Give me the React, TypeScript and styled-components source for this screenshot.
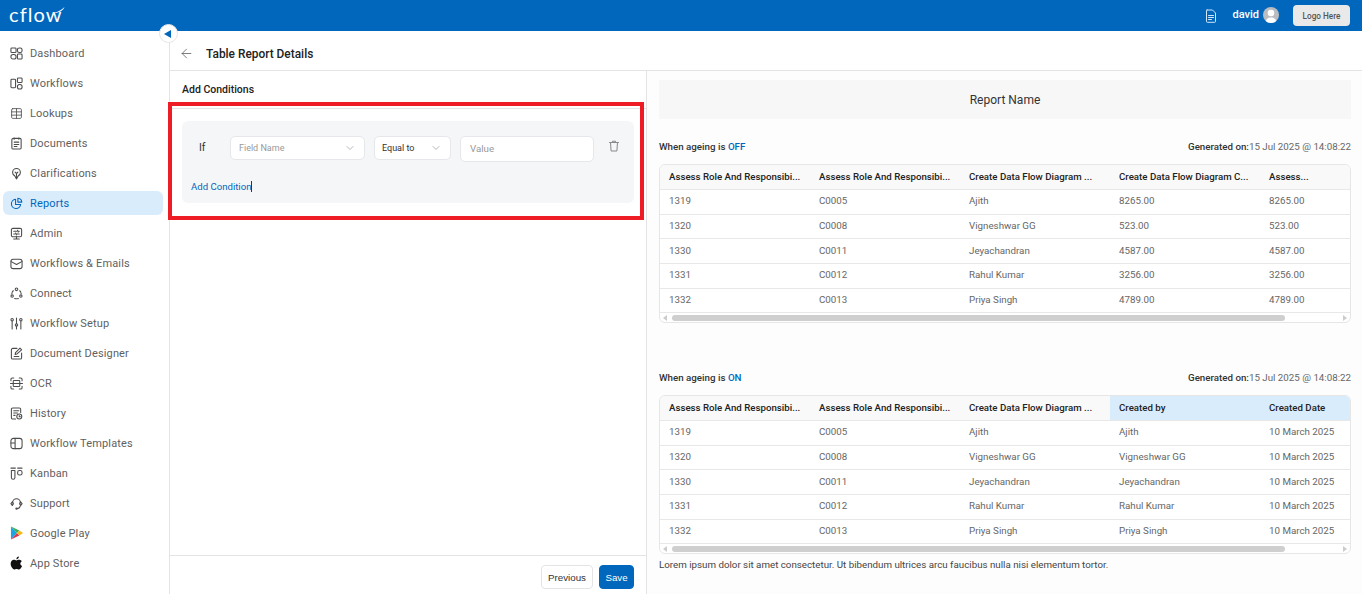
import React from 'react'
import styled, { createGlobalStyle } from 'styled-components'
import { ArrowLeft, ChevronDown, Table } from 'lucide-react'

const GlobalStyle = createGlobalStyle`
  html, body { margin: 0; padding: 0; height: 100%; overflow: hidden; }
  body { font-family: Roboto, "Liberation Sans", sans-serif; font-size: 12px; color: #222; background: #fff; }
  * { box-sizing: border-box; }
`

const Page = styled.div`
  position: relative;
  width: 1362px;
  height: 594px;
  display: flex;
  flex-direction: column;
  overflow: hidden;
`

const TopBar = styled.header`
  height: 31px;
  flex: none;
  background: #0067bd;
  display: flex;
  align-items: center;
  padding: 0 12px 0 9px;
`

const Logo = styled.div`
  position: relative;
  color: #fff;
  font-family: Lato, Roboto, sans-serif;
  font-weight: 400;
  font-size: 20px;
  line-height: 22px;
  letter-spacing: 1.1px;
  margin-top: -3px;
  svg { position: absolute; right: -2px; top: 4px; }
`

const TopRight = styled.div`
  margin-left: auto;
  display: flex;
  align-items: center;
  color: #fff;
`

const UserName = styled.span`
  font-weight: 500;
  font-size: 11px;
  margin: -2px 4px 0 15px;
`

const Avatar = styled.div`
  width: 16px;
  height: 16px;
  border-radius: 50%;
  background: #b9bcc0;
  overflow: hidden;
  margin: -1px 14px 0 0;
`

const LogoBox = styled.div`
  width: 57px;
  height: 21px;
  border-radius: 4px;
  background: #e9e9e9;
  color: #555;
  font-size: 8.2px;
  font-weight: 500;
  display: flex;
  align-items: center;
  justify-content: center;
`

const Body = styled.div`
  flex: 1;
  display: flex;
  min-height: 0;
`

const Sidebar = styled.nav`
  width: 170px;
  flex: none;
  border-right: 1px solid #e4e4e4;
  padding: 10px 6px 0 3px;
  display: flex;
  flex-direction: column;
  gap: 6px;
`

const NavItem = styled.div<{ $active?: boolean }>`
  height: 24px;
  flex: none;
  display: flex;
  align-items: center;
  gap: 7px;
  padding-left: 7px;
  border-radius: 6px;
  font-size: 11px;
  letter-spacing: 0.15px;
  color: ${p => (p.$active ? '#0067bd' : '#5f5f5f')};
  background: ${p => (p.$active ? '#d9ecfc' : 'transparent')};
  svg { flex: none; }
`

const CollapseButton = styled.button`
  position: absolute;
  left: 159px;
  top: 24px;
  width: 19px;
  height: 19px;
  padding: 0;
  border: 1px solid #e6e6e6;
  border-radius: 50%;
  background: #fff;
  display: flex;
  align-items: center;
  justify-content: center;
  &::before {
    content: '';
    margin-left: -2px;
    border-style: solid;
    border-width: 4.5px 7px 4.5px 0;
    border-color: transparent #0067bd transparent transparent;
  }
`

const Main = styled.main`
  flex: 1;
  min-width: 0;
  display: flex;
  flex-direction: column;
`

const PageHeader = styled.div`
  height: 40px;
  flex: none;
  display: flex;
  align-items: center;
  gap: 12px;
  padding: 5px 0 0 9px;
  border-bottom: 1px solid #e4e4e4;
  color: #555;
`

const PageTitle = styled.h1`
  margin: 1px 0 0;
  font-size: 11.9px;
  font-weight: 500;
  color: #222;
`

const Split = styled.div`
  flex: 1;
  min-height: 0;
  display: flex;
`

const LeftPane = styled.section`
  width: 477px;
  flex: none;
  border-right: 1px solid #e4e4e4;
  display: flex;
  flex-direction: column;
`

const SectionTitle = styled.h2`
  margin: 0;
  height: 38px;
  flex: none;
  padding: 12px 12px 0;
  font-size: 10.5px;
  line-height: 14px;
  font-weight: 500;
  color: #222;
  border-bottom: 1px solid #e4e4e4;
`

const LeftContent = styled.div`
  flex: 1;
  padding: 12px;
`

const ConditionCard = styled.div`
  height: 82px;
  background: #f5f6f8;
  border-radius: 6px;
  padding: 15px 9px 0;
`

const ConditionRow = styled.div`
  display: flex;
  align-items: flex-start;
`

const IfLabel = styled.span`
  width: 39px;
  padding: 5px 0 0 8px;
  font-size: 10.5px;
  line-height: 13px;
  color: #333;
`

const SelectBox = styled.div<{ $width: number; $filled?: boolean }>`
  width: ${p => p.$width}px;
  height: 24px;
  margin-right: 9px;
  padding: 0 8px 0 ${p => (p.$filled ? 7 : 8)}px;
  display: flex;
  align-items: center;
  justify-content: space-between;
  background: #fff;
  border: 1px solid #e6e7ea;
  border-radius: 5px;
  font-size: 9px;
  color: ${p => (p.$filled ? '#333' : '#999')};
  svg { color: #888; }
`

const ValueInput = styled.div`
  width: 134px;
  height: 26px;
  padding: 0 9px 2px;
  display: flex;
  align-items: center;
  background: #fff;
  border: 1px solid #e6e7ea;
  border-radius: 5px;
  font-size: 9.7px;
  color: #999;
`

const DeleteButton = styled.span`
  margin: 4px 0 0 14px;
  display: flex;
`

const AddCondition = styled.div`
  display: flex;
  align-items: center;
  height: 14px;
  margin-top: 17px;
  font-size: 9.6px;
  color: #0067bd;
  &::after {
    content: '';
    width: 1px;
    height: 11px;
    background: #1a3a5c;
  }
`

const LeftFooter = styled.div`
  height: 39px;
  flex: none;
  border-top: 1px solid #e4e4e4;
  display: flex;
  justify-content: flex-end;
  align-items: flex-start;
  gap: 6px;
  padding: 9px 12px 0 0;
`

const Button = styled.button<{ $primary?: boolean }>`
  height: 24px;
  width: ${p => (p.$primary ? 35 : 52)}px;
  padding: 0;
  border-radius: 4px;
  font-family: "Liberation Sans", Arial, sans-serif;
  font-size: 9.75px;
  border: 1px solid ${p => (p.$primary ? '#0067bd' : '#e4e4e4')};
  background: ${p => (p.$primary ? '#0067bd' : '#fff')};
  color: ${p => (p.$primary ? '#fff' : '#333')};
`

const RightPane = styled.section`
  flex: 1;
  min-width: 0;
  background: #fdfdfd;
  padding: 9px 11px 0 12px;
`

const ReportName = styled.div`
  height: 39px;
  background: #f7f7f7;
  display: flex;
  align-items: center;
  justify-content: center;
  font-size: 12px;
  color: #333;
`

const ReportBlock = styled.div<{ $gap: number }>`
  margin-top: ${p => p.$gap}px;
`

const MetaRow = styled.div`
  display: flex;
  justify-content: space-between;
  align-items: center;
  height: 14px;
  font-size: 9.75px;
  font-weight: 500;
  color: #333;
`

const StateWord = styled.span`
  color: #0067bd;
`

const GeneratedValue = styled.span`
  font-weight: 400;
  color: #666;
`

const TableFrame = styled.div<{ $gap: number }>`
  margin-top: ${p => p.$gap}px;
  border: 1px solid #e6e6e6;
  border-radius: 6px;
  overflow: hidden;
  background: #fff;
`

const HeadRow = styled.div`
  display: grid;
  grid-template-columns: repeat(4, 150px) 1fr;
  height: 25px;
  border-bottom: 1px solid #e8e8e8;
  background: #f9f9f9;
`

const HeadCell = styled.div<{ $highlight?: boolean }>`
  padding: 0 0 1px 9px;
  display: flex;
  align-items: center;
  font-size: 9.7px;
  font-weight: 500;
  white-space: nowrap;
  color: #222;
  background: ${p => (p.$highlight ? '#d9ecfc' : 'transparent')};
`

const DataRow = styled.div`
  display: grid;
  grid-template-columns: repeat(4, 150px) 1fr;
  height: 24.7px;
  border-bottom: 1px solid #e8e8e8;
  &:last-of-type { border-bottom: 0; }
`

const DataCell = styled.div`
  padding: 0 0 2px 9px;
  display: flex;
  align-items: center;
  font-size: 9.75px;
  white-space: nowrap;
  color: #666;
`

const ScrollBar = styled.div`
  height: 8.5px;
  display: flex;
  align-items: center;
  padding: 0 3px;
  gap: 3px;
`

const ScrollArrow = styled.span<{ $right?: boolean }>`
  width: 0;
  height: 0;
  border-style: solid;
  border-width: ${p => (p.$right ? '3.5px 0 3.5px 4px' : '3.5px 4px 3.5px 0')};
  border-color: ${p => (p.$right ? 'transparent transparent transparent #ccc' : 'transparent #ccc transparent transparent')};
`

const ScrollTrack = styled.div`
  flex: 1;
  height: 6px;
  margin: 0 0 0 2px;
`

const ScrollThumb = styled.div`
  width: 613px;
  height: 6px;
  border-radius: 3px;
  background: #cfcfcf;
`

const Note = styled.p`
  margin: 5px 0 0;
  font-size: 9.75px;
  line-height: 12px;
  color: #444;
`

const RedFrame = styled.div`
  position: absolute;
  left: 168px;
  top: 102px;
  width: 476px;
  height: 118px;
  border: 4px solid #ee1c25;
  pointer-events: none;
`

const I = ({ children, color = '#4c4c4c' }: { children: React.ReactNode; color?: string }) => (
  <svg width="13" height="13" viewBox="0 0 14 14" fill="none" stroke={color} strokeWidth="1.15" strokeLinecap="round" strokeLinejoin="round">
    {children}
  </svg>
)

const navItems: { label: string; active?: boolean; icon: React.ReactNode }[] = [
  { label: 'Dashboard', icon: <I><rect x="1" y="1" width="5.5" height="5" rx="1" /><rect x="8" y="1" width="5" height="5" rx="2" /><rect x="8" y="7.5" width="5" height="5.500" rx="1" /><rect x="1" y="8" width="5.5" height="5" rx="2.200" /></I> },
  { label: 'Workflows', icon: <I><rect x="1" y="2.500" width="5" height="9" rx="1" /><rect x="8" y="1" width="5" height="5" rx="1" /><rect x="8" y="8" width="5" height="5" rx="2.200" /></I> },
  { label: 'Lookups', icon: <Table size={13} color="#4c4c4c" strokeWidth={1.5} /> },
  { label: 'Documents', icon: <I><rect x="2" y="1.500" width="10" height="11.500" rx="1.500" /><path d="M4.500 1v1.500M9.500 1v1.500M4.500 5.500h5M4.500 8h5M4.500 10.300h3" /></I> },
  { label: 'Clarifications', icon: <I><path d="M5 9.500C3.600 8.600 2.800 7.300 2.800 5.900a4.200 4.200 0 0 1 8.400 0c0 1.400-.8 2.700-2.200 3.600L7 12.800z" /><path d="M5.500 5.500 7 7l1.500-1.500M7 7v5" /></I> },
  { label: 'Reports', active: true, icon: <I color="#0067bd"><path d="M6 2.500a5 5 0 1 0 5.500 5.500H6z" /><path d="M8.500 1.300a4.500 4.500 0 0 1 4.200 4.200H8.500z" /></I> },
  { label: 'Admin', icon: <I><rect x="1.500" y="1.500" width="11" height="9" rx="1.500" /><path d="M4 13h6M7 10.500V13M4 4.500h3M9 4.500h1M4 7.500h1M7 7.500h3M8 3.500l.8 2M6 6.500l.8 2" /></I> },
  { label: 'Workflows & Emails', icon: <I><rect x="1" y="2.500" width="12" height="10" rx="2.400" /><path d="M1.300 5 7 8l5.700-3" /></I> },
  { label: 'Connect', icon: <I><circle cx="7" cy="2.500" r="1.400" /><circle cx="2.300" cy="9.800" r="1.300" /><circle cx="11.700" cy="9.800" r="1.300" /><path d="M3.600 4c-1 .8-1.500 2-1.600 3.200M10.400 4c1 .8 1.500 2 1.600 3.200M5 12.400c1.300.4 2.700.4 4 0" strokeDasharray="2 1" /></I> },
  { label: 'Workflow Setup', icon: <I><circle cx="2.300" cy="3" r="1.300" /><circle cx="7" cy="8.500" r="1.300" /><circle cx="11.700" cy="3" r="1.300" /><path d="M2.300 4.300V13M7 1v6.200M7 9.800V13M11.700 4.300V13" /></I> },
  { label: 'Document Designer', icon: <I><path d="M7.500 1.500H3c-.9 0-1.500.6-1.500 1.500v8.500c0 .9.6 1.500 1.500 1.500h8c.9 0 1.500-.6 1.500-1.500V6.500" /><path d="M4.500 10.300h5M5.500 8 6 6l4.800-4.800L12.500 3 7.500 7.500z" /></I> },
  { label: 'OCR', icon: <I><path d="M1 4V2.500a1.500 1.500 0 0 1 1.500-1.500H4M10 1h1.500A1.500 1.500 0 0 1 13 2.500V4M1 10v1.500A1.500 1.500 0 0 0 2.500 13H4M10 13h1.500a1.500 1.500 0 0 0 1.500-1.500V10M.5 7h13" /><rect x="3.500" y="3.800" width="7" height="6.400" rx=".8" /></I> },
  { label: 'History', icon: <I><path d="M6 13H3c-.9 0-1.500-.6-1.500-1.500v-9C1.500 1.600 2.100 1 3 1h7c.9 0 1.500.6 1.500 1.500V6M4 4h5.500M4 6.500h4M4 9h1.500" /><circle cx="10" cy="10.300" r="2.700" /><path d="M10 9.200v1.200h1" /></I> },
  { label: 'Workflow Templates', icon: <I><rect x="1" y="1.500" width="12" height="11" rx="2.600" /><path d="M5.500 1.500v11M1 6.500h4.500" /></I> },
  { label: 'Kanban', icon: <I><path d="M1 1.200h4.800M8.200 1.200H13" /><path d="M1.500 3.800h3.800v7.400a1.900 1.900 0 0 1-3.800 0z" /><rect x="8.200" y="3.800" width="4.800" height="4.800" rx="2" /></I> },
  { label: 'Support', icon: <I><path d="M2.800 6.500V6a4.200 4.200 0 0 1 8.400 0v.5" /><path d="M2.600 5.200 1 7.200l1.600 2 1.100-2zM11.400 5.200 13 7.200l-1.600 2-1.100-2z" /><path d="M11 9.800c-.5 1.700-1.900 2.700-3.500 2.700" /><circle cx="7" cy="12.500" r=".7" /></I> },
  { label: 'Google Play', icon: <svg width="13" height="14" viewBox="0 0 14 14"><path d="M1 0v14L7.500 7z" fill="#1aa6e0" /><path d="M1 0 7.500 7l2.600-2.600z" fill="#3cab5b" /><path d="M1 14 7.500 7l2.600 2.600z" fill="#e0384a" /><path d="M10.100 4.400 14 7l-3.900 2.600L7.500 7z" fill="#f7b716" /></svg> },
  { label: 'App Store', icon: <svg width="13" height="14" viewBox="0 0 14 14"><path d="M9.600 0c.1 1.400-1.100 3-2.700 2.900-.2-1.400 1.300-2.900 2.700-2.900zM13 10.100c-.7 1.800-2.200 3.900-3.500 3.900-.9 0-1.300-.6-2.400-.6s-1.600.6-2.400.6C3 14 .7 10.700.7 7.900c0-2.800 1.800-4.300 3.500-4.300 1.100 0 1.900.7 2.700.7.600 0 1.700-.8 3-.7.500 0 2 .2 2.900 1.600-2.400 1.500-2 4.100.2 4.900z" fill="#111" /></svg> },
]

type RowData = string[]

const offRows: RowData[] = [
  ['1319', 'C0005', 'Ajith', '8265.00', '8265.00'],
  ['1320', 'C0008', 'Vigneshwar GG', '523.00', '523.00'],
  ['1330', 'C0011', 'Jeyachandran', '4587.00', '4587.00'],
  ['1331', 'C0012', 'Rahul Kumar', '3256.00', '3256.00'],
  ['1332', 'C0013', 'Priya Singh', '4789.00', '4789.00'],
]

const onRows: RowData[] = [
  ['1319', 'C0005', 'Ajith', 'Ajith', '10 March 2025'],
  ['1320', 'C0008', 'Vigneshwar GG', 'Vigneshwar GG', '10 March 2025'],
  ['1330', 'C0011', 'Jeyachandran', 'Jeyachandran', '10 March 2025'],
  ['1331', 'C0012', 'Rahul Kumar', 'Rahul Kumar', '10 March 2025'],
  ['1332', 'C0013', 'Priya Singh', 'Priya Singh', '10 March 2025'],
]

const ReportTable = ({ heads, rows, highlightFrom, gap }: { heads: string[]; rows: RowData[]; highlightFrom?: number; gap: number }) => (
  <TableFrame $gap={gap}>
    <HeadRow>
      {heads.map((h, i) => (
        <HeadCell key={i} $highlight={highlightFrom !== undefined && i >= highlightFrom}>{h}</HeadCell>
      ))}
    </HeadRow>
    {rows.map(r => (
      <DataRow key={r[0]}>
        {r.map((c, i) => <DataCell key={i}>{c}</DataCell>)}
      </DataRow>
    ))}
    <ScrollBar>
      <ScrollArrow />
      <ScrollTrack><ScrollThumb /></ScrollTrack>
      <ScrollArrow $right />
    </ScrollBar>
  </TableFrame>
)

export default function App() {
  return (
    <Page>
      <GlobalStyle />
      <TopBar>
        <Logo>
          cflow
          <svg width="10" height="6" viewBox="0 0 10 6" fill="#fff"><path d="M0 5.500C3.500 4.500 6.500 3 9.500 0 8.500 3 5 5.500 0 6z" /></svg>
        </Logo>
        <TopRight>
          <svg width="12" height="14" viewBox="0 0 12 14" fill="none" stroke="#cfe6fb" strokeWidth="1" strokeLinecap="round" strokeLinejoin="round"><path d="M2 1h5.500L10.500 4v8.500a.8.8 0 0 1-.8.8H2.300a.8.8 0 0 1-.8-.8V1.800A.8.800 0 0 1 2 1z" /><path d="M3.500 6.500h5M3.500 8.500h5M3.500 10.500h3" /></svg>
          <UserName>david</UserName>
          <Avatar>
            <svg width="16" height="16" viewBox="0 0 16 16"><circle cx="8" cy="6" r="3.300" fill="#fff" /><path d="M2.500 16c0-3.500 2.500-5.500 5.500-5.500s5.500 2 5.500 5.500z" fill="#fff" /></svg>
          </Avatar>
          <LogoBox>Logo Here</LogoBox>
        </TopRight>
      </TopBar>
      <Body>
        <Sidebar>
          {navItems.map(n => (
            <NavItem key={n.label} $active={n.active}>
              {n.icon}
              {n.label}
            </NavItem>
          ))}
        </Sidebar>
        <Main>
          <PageHeader>
            <ArrowLeft size={15} strokeWidth={1.2} />
            <PageTitle>Table Report Details</PageTitle>
          </PageHeader>
          <Split>
            <LeftPane>
              <SectionTitle>Add Conditions</SectionTitle>
              <LeftContent>
                <ConditionCard>
                  <ConditionRow>
                    <IfLabel>If</IfLabel>
                    <SelectBox $width={135}>Field Name<ChevronDown size={12} strokeWidth={1.2} /></SelectBox>
                    <SelectBox $width={77} $filled>Equal to<ChevronDown size={12} strokeWidth={1.2} /></SelectBox>
                    <ValueInput>Value</ValueInput>
                    <DeleteButton>
                      <svg width="12" height="12" viewBox="0 0 12 12" fill="none" stroke="#888" strokeWidth="1" strokeLinecap="round" strokeLinejoin="round"><path d="M1.500 2.500h9M4.500 2.500V1.200h3v1.300M2.500 2.500l.6 8.500h5.800l.6-8.500" /></svg>
                    </DeleteButton>
                  </ConditionRow>
                  <AddCondition>Add Condition</AddCondition>
                </ConditionCard>
              </LeftContent>
              <LeftFooter>
                <Button>Previous</Button>
                <Button $primary>Save</Button>
              </LeftFooter>
            </LeftPane>
            <RightPane>
              <ReportName>Report Name</ReportName>
              <ReportBlock $gap={20}>
                <MetaRow>
                  <span>When ageing is <StateWord>OFF</StateWord></span>
                  <span>Generated on:<GeneratedValue>15 Jul 2025 @ 14:08:22</GeneratedValue></span>
                </MetaRow>
                <ReportTable
                  gap={11}
                  heads={['Assess Role And Responsibi...', 'Assess Role And Responsibi...', 'Create Data Flow Diagram ...', 'Create Data Flow Diagram C...', 'Assess...']}
                  rows={offRows}
                />
              </ReportBlock>
              <ReportBlock $gap={48}>
                <MetaRow>
                  <span>When ageing is <StateWord>ON</StateWord></span>
                  <span>Generated on:<GeneratedValue>15 Jul 2025 @ 14:08:22</GeneratedValue></span>
                </MetaRow>
                <ReportTable
                  gap={10}
                  heads={['Assess Role And Responsibi...', 'Assess Role And Responsibi...', 'Create Data Flow Diagram ...', 'Created by', 'Created Date']}
                  rows={onRows}
                  highlightFrom={3}
                />
                <Note>Lorem ipsum dolor sit amet consectetur. Ut bibendum ultrices arcu faucibus nulla nisi elementum tortor.</Note>
              </ReportBlock>
            </RightPane>
          </Split>
        </Main>
      </Body>
      <CollapseButton />
      <RedFrame />
    </Page>
  )
}
